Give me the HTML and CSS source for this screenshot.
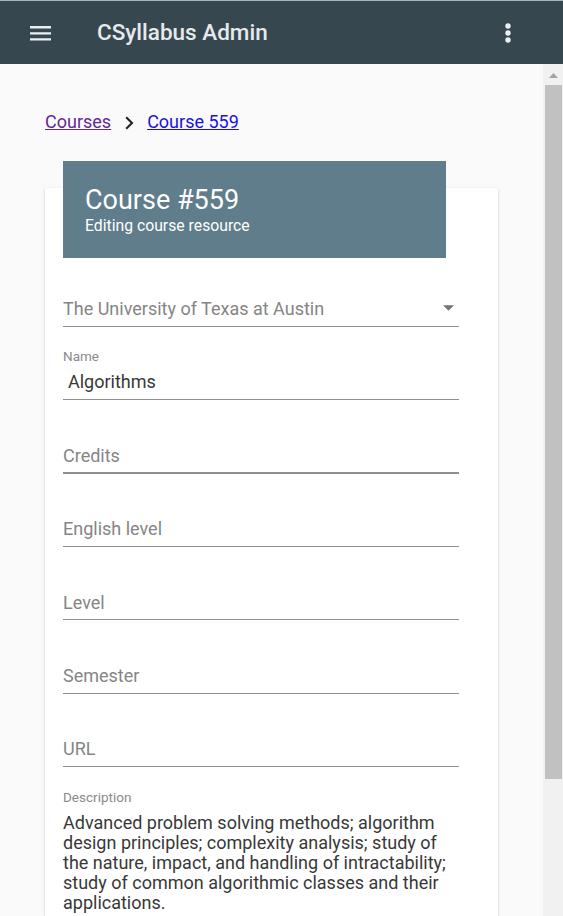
FILE: index.html
```
<!DOCTYPE html>
<html lang="en">
<head>
<meta charset="utf-8">
<title>CSyllabus Admin</title>
<link rel="stylesheet" href="styles.css">
</head>
<body>
<header class="toolbar">
  <svg class="menu" viewBox="0 0 21 15"><path d="M0 0h21v2.4H0zM0 6.2h21v2.4H0zM0 12.2h21v2.4H0z"/></svg>
  <h1 class="brand"><span>CSyllabus Admin</span></h1>
  <svg class="more" viewBox="0 0 6 20"><circle cx="3" cy="3" r="2.7"/><circle cx="3" cy="10" r="2.7"/><circle cx="3" cy="17" r="2.7"/></svg>
</header>
<div class="body">
  <main class="content">
    <nav class="crumbs">
      <a class="visited" href="#"><span>Courses</span></a>
      <svg class="chevron" viewBox="0 0 9 14"><path d="M1.2 1.2 7 7l-5.8 5.8"/></svg>
      <a href="#"><span>Course 559</span></a>
    </nav>
    <section class="card">
      <div class="card-head">
        <h2>Course #559</h2>
        <p>Editing course resource</p>
      </div>
      <div class="fields">
        <div class="field select"><span>The University of Texas at Austin</span><svg class="caret" viewBox="0 0 11 6"><path d="M0 .3h11L5.5 5.7z"/></svg></div>
        <div class="field filled"><label>Name</label><span class="value">Algorithms</span></div>
        <div class="field thick"><span>Credits</span></div>
        <div class="field"><span>English level</span></div>
        <div class="field low"><span>Level</span></div>
        <div class="field tall"><span>Semester</span></div>
        <div class="field"><span>URL</span></div>
      </div>
      <label class="desc-label">Description</label>
      <p class="desc">Advanced problem solving methods; algorithm<br>design principles; complexity analysis; study of<br>the nature, impact, and handling of intractability;<br>study of common algorithmic classes and their<br>applications.</p>
    </section>
  </main>
  <aside class="scrollbar">
    <div class="arrow"><svg viewBox="0 0 9 5"><path d="M0 5 4.5 0 9 5z"/></svg></div>
    <div class="thumb"></div>
  </aside>
</div>
</body>
</html>
```
FILE: styles.css
```
* { box-sizing: border-box; }
html, body { height: 100%; }
body {
  margin: 0;
  overflow: hidden;
  background: #fafafa;
  color: #383838;
  font: 400 18px/20px Roboto, sans-serif;
}
h1, h2, p { margin: 0; }
.toolbar {
  display: flex;
  align-items: center;
  height: 64px;
  padding: 2px 52px 0 30px;
  border-top: 1px solid #aab6bf;
  background: #37474f;
  fill: #eceff1;
  color: #e6eaec;
}
.menu { width: 21px; height: 15px; }
.brand { flex: 1; margin: -3px 0 0 46px; font-size: 22.5px; line-height: 30px; font-weight: 500; }
.more { width: 6px; height: 20px; margin-top: -1px; }
.body { display: flex; height: 852px; }
.content { flex: 1; padding: 48px 45px 0; }
.crumbs { display: flex; align-items: center; height: 20px; }
.crumbs a { color: #1a12dc; }
.crumbs .visited { color: #5f2a94; }
.chevron { width: 9px; height: 14px; margin: 1px 13px 0 14px; fill: none; stroke: #222; stroke-width: 2.1; }
.card {
  height: 728px;
  width: 453px;
  margin-top: 56px;
  padding: 0 39px 0 18px;
  border-radius: 2px 2px 0 0;
  background: #fff;
  box-shadow: 0 1px 3px rgba(0, 0, 0, .22);
}
.card-head {
  position: relative;
  top: -27px;
  width: 383px;
  height: 97px;
  margin-bottom: -27px;
  padding: 23px 22px;
  background: #607d8b;
  color: #fff;
}
.card-head h2 { font-size: 27px; line-height: 32px; font-weight: 400; }
.card-head p { font-size: 15.75px; line-height: 19px; }
.field {
  display: flex;
  flex-direction: column;
  justify-content: flex-end;
  height: 73px;
  padding-bottom: 7px;
  border-bottom: 1px solid #8f8f8f;
  color: #858585;
}
.field.select { height: 69px; flex-direction: row; justify-content: space-between; align-items: flex-end; }
.caret { width: 11px; height: 6px; margin: 0 5px 8px 0; fill: #757575; }
.field.thick { height: 74px; padding-bottom: 6px; border-bottom-width: 2px; }
.field.low { padding-bottom: 6px; }
.field.tall { height: 74px; }
.field label, .desc-label { font-size: 13.5px; line-height: 16px; color: #8a8a8a; }
.value { margin: 8px 0 0 5px; color: #383838; }
.desc-label { display: block; margin-top: 22px; }
.desc { margin-top: 8px; white-space: nowrap; }
.scrollbar { width: 20px; background: #f1f1f1; padding: 0 1px 0 2px; }
.arrow { display: flex; align-items: center; justify-content: center; height: 21px; padding-top: 2px; }
.arrow svg { width: 9px; height: 5px; fill: #a3a3a3; }
.thumb { height: 694px; background: #c1c1c1; }
```
